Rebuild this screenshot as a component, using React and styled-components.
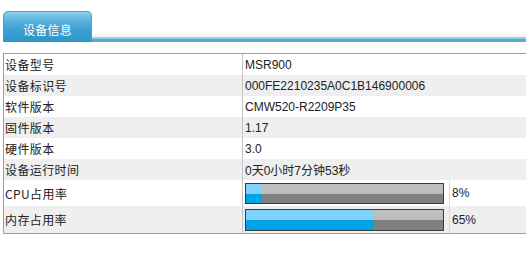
import React from "react";
import styled, { createGlobalStyle } from "styled-components";

const Global = createGlobalStyle`
  html, body { margin: 0; padding: 0; background: #fff; overflow: hidden; }
  body { font-family: "Liberation Sans", Arial, "Noto Sans CJK SC", sans-serif; }
`;

const Page = styled.div`
  padding: 11px 0 0 3px;
`;

const Header = styled.div`
  display: flex;
  align-items: flex-end;
  height: 31px;
`;

const Tab = styled.div`
  width: 89px;
  height: 31px;
  box-sizing: border-box;
  border-radius: 5px 5px 0 0;
  border: 1px solid #4a9fcb;
  border-bottom: none;
  background: linear-gradient(to bottom, #8fd0ee 0%, #5fb6df 25%, #3ba0d2 60%, #2e93c6 100%);
  color: #fff;
  font-family: "Noto Sans CJK SC", sans-serif;
  font-size: 12px;
  line-height: 12px;
  text-align: center;
  padding-top: 12px;
  letter-spacing: 0.3px;
`;

const TabLine = styled.div`
  flex: 1;
  height: 8px;
  background: linear-gradient(
    to bottom,
    #fbfbef 0px,
    #eef6f5 3px,
    #a3d3ea 3px,
    #8cc7e4 5px,
    #5aa9d0 5px,
    #5aa9d0 8px
  );
`;

const Table = styled.div`
  margin-top: 11px;
  border: 1px solid #9b9bb3;
  border-right: none;
  font-size: 12px;
  color: #222;
`;

const Row = styled.div`
  display: flex;
  height: ${(p) => (p.$tall ? p.$tall : 21)}px;
  background: ${(p) => (p.$alt ? "#efefef" : "#ffffff")};
`;

const Label = styled.div`
  width: 238px;
  flex: none;
  padding-left: 1px;
  box-sizing: border-box;
  display: flex;
  align-items: center;
  font-family: "Noto Sans CJK SC", sans-serif;
  letter-spacing: 0.4px;
`;

const Value = styled.div`
  border-left: 1px solid #c4c4c4;
  padding-left: 2px;
  display: flex;
  align-items: center;
  flex: 1;
  min-width: 0;
  font-family: "Liberation Sans", Arial, "Noto Sans CJK SC", sans-serif;
`;

const BarCell = styled.div`
  width: 204px;
  flex: none;
  box-sizing: border-box;
  display: flex;
  align-items: center;
`;

const Bar = styled.div`
  width: 199px;
  height: ${(p) => p.$h}px;
  box-sizing: border-box;
  border: 1px solid #3a3a3a;
  display: flex;
  background: linear-gradient(to bottom, #c0c0c0 0%, #bcbcbc 50%, #808080 50%, #808080 100%);
`;

const Fill = styled.div`
  height: 100%;
  background: linear-gradient(to bottom, #7fd2fb 0%, #7fd2fb 50%, #00a3ea 50%, #00a3ea 100%);
`;

const Pct = styled.div`
  align-self: stretch;
  display: flex;
  align-items: center;
  border-left: 1px solid #dcdcdc;
  padding-left: 2px;
  flex: 1;
`;

const info = [
  ["设备型号", "MSR900"],
  ["设备标识号", "000FE2210235A0C1B146900006"],
  ["软件版本", "CMW520-R2209P35"],
  ["固件版本", "1.17"],
  ["硬件版本", "3.0"],
  ["设备运行时间", "0天0小时7分钟53秒"],
];

const usage = [
  { name: "CPU占用率", pct: 8, h: 26, bar: 21 },
  { name: "内存占用率", pct: 65, h: 27, bar: 22 },
];

export default function App() {
  return (
    <>
      <Global />
      <Page>
        <Header>
          <Tab>设备信息</Tab>
          <TabLine />
        </Header>
        <Table>
          {info.map(([k, v], i) => (
            <Row key={k} $alt={i % 2 === 1}>
              <Label>{k}</Label>
              <Value>{v}</Value>
            </Row>
          ))}
          {usage.map((u, i) => (
            <Row key={u.name} $alt={i % 2 === 1} $tall={u.h}>
              <Label>{u.name}</Label>
              <Value>
                <BarCell>
                  <Bar $h={u.bar}>
                    <Fill style={{ width: `${(u.pct / 100) * 197}px` }} />
                  </Bar>
                </BarCell>
                <Pct>{u.pct}%</Pct>
              </Value>
            </Row>
          ))}
        </Table>
      </Page>
    </>
  );
}
